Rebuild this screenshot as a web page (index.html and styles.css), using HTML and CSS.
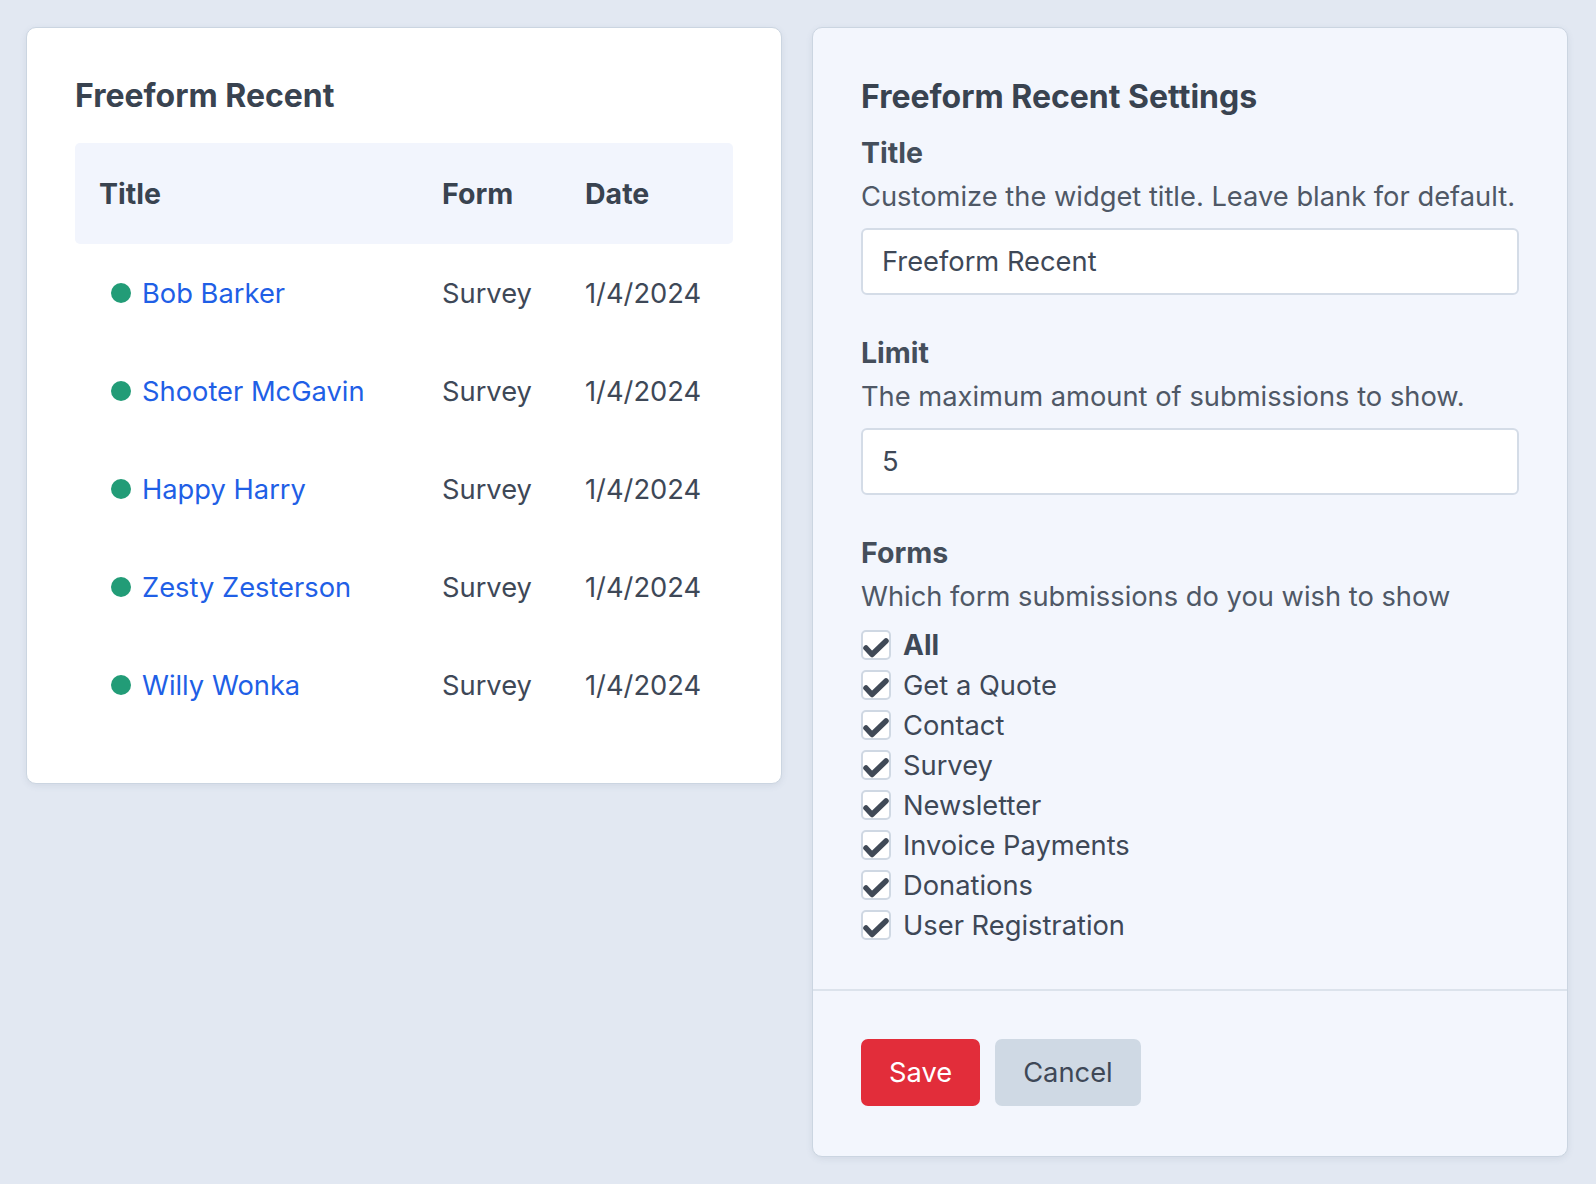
FILE: index.html
```html
<!DOCTYPE html>
<html lang="en">
<head>
<meta charset="utf-8">
<title>Freeform Recent</title>
<link rel="stylesheet" href="styles.css">
</head>
<body>
<div class="page">
  <section class="card card-widget">
    <h2 class="card-title">Freeform Recent</h2>
    <table class="recent">
      <colgroup><col class="c-title"><col class="c-form"><col class="c-date"></colgroup>
      <thead>
        <tr><th>Title</th><th>Form</th><th>Date</th></tr>
      </thead>
      <tbody>
        <tr><td><span class="entry"><span class="dot"></span><a href="#">Bob Barker</a></span></td><td>Survey</td><td>1/4/2024</td></tr>
        <tr><td><span class="entry"><span class="dot"></span><a href="#">Shooter McGavin</a></span></td><td>Survey</td><td>1/4/2024</td></tr>
        <tr><td><span class="entry"><span class="dot"></span><a href="#">Happy Harry</a></span></td><td>Survey</td><td>1/4/2024</td></tr>
        <tr><td><span class="entry"><span class="dot"></span><a href="#">Zesty Zesterson</a></span></td><td>Survey</td><td>1/4/2024</td></tr>
        <tr><td><span class="entry"><span class="dot"></span><a href="#">Willy Wonka</a></span></td><td>Survey</td><td>1/4/2024</td></tr>
      </tbody>
    </table>
  </section>

  <section class="card card-settings">
    <div class="settings-body">
      <h2 class="card-title">Freeform Recent Settings</h2>
      <div class="field">
        <div class="label">Title</div>
        <div class="desc">Customize the widget title. Leave blank for default.</div>
        <div class="input">Freeform Recent</div>
      </div>
      <div class="field">
        <div class="label">Limit</div>
        <div class="desc">The maximum amount of submissions to show.</div>
        <div class="input">5</div>
      </div>
      <div class="field">
        <div class="label">Forms</div>
        <div class="desc">Which form submissions do you wish to show</div>
        <ul class="checks">
          <li class="check-row"><span class="box"><svg viewBox="0 0 30 30"><polyline points="5,18 11,24.5 25,11"/></svg></span><span class="check-label strong">All</span></li>
          <li class="check-row"><span class="box"><svg viewBox="0 0 30 30"><polyline points="5,18 11,24.5 25,11"/></svg></span><span class="check-label">Get a Quote</span></li>
          <li class="check-row"><span class="box"><svg viewBox="0 0 30 30"><polyline points="5,18 11,24.5 25,11"/></svg></span><span class="check-label">Contact</span></li>
          <li class="check-row"><span class="box"><svg viewBox="0 0 30 30"><polyline points="5,18 11,24.5 25,11"/></svg></span><span class="check-label">Survey</span></li>
          <li class="check-row"><span class="box"><svg viewBox="0 0 30 30"><polyline points="5,18 11,24.5 25,11"/></svg></span><span class="check-label">Newsletter</span></li>
          <li class="check-row"><span class="box"><svg viewBox="0 0 30 30"><polyline points="5,18 11,24.5 25,11"/></svg></span><span class="check-label">Invoice Payments</span></li>
          <li class="check-row"><span class="box"><svg viewBox="0 0 30 30"><polyline points="5,18 11,24.5 25,11"/></svg></span><span class="check-label">Donations</span></li>
          <li class="check-row"><span class="box"><svg viewBox="0 0 30 30"><polyline points="5,18 11,24.5 25,11"/></svg></span><span class="check-label">User Registration</span></li>
        </ul>
      </div>
    </div>
    <div class="settings-footer">
      <button class="btn btn-save" type="button">Save</button>
      <button class="btn btn-cancel" type="button">Cancel</button>
    </div>
  </section>
</div>
</body>
</html>
```

FILE: styles.css
```css
* { box-sizing: border-box; }

html, body {
  margin: 0;
  padding: 0;
}

body {
  background: #e2e8f2;
  font-family: Inter, "Noto Sans", "Liberation Sans", sans-serif;
  color: #3e4857;
  min-height: 1184px;
}

.page {
  display: grid;
  grid-template-columns: 1fr 1fr;
  gap: 30px;
  padding: 27px 28px 28px 26px;
  align-items: start;
}

.card {
  border: 1px solid #cbd5e1;
  border-radius: 10px;
  box-shadow: 0 2px 6px rgba(100, 116, 139, 0.12);
}

.card-widget {
  background: #ffffff;
  padding: 48px 48px 49px;
}

.card-title {
  margin: 0;
  font-size: 32px;
  line-height: 40px;
  font-weight: 700;
  color: #394350;
}

.recent {
  width: 100%;
  margin-top: 27px;
  border-collapse: collapse;
  table-layout: fixed;
  font-size: 27.3px;
}

.c-title { width: 343px; }
.c-form { width: 143px; }

.recent th {
  background: #f2f5fd;
  height: 101px;
  padding: 0 24px;
  text-align: left;
  font-size: 28.5px;
  font-weight: 700;
  color: #394350;
}

.recent th:first-child { border-radius: 5px 0 0 5px; }
.recent th:last-child { border-radius: 0 5px 5px 0; }

.recent td {
  height: 98px;
  padding: 0 24px;
  color: #3e4857;
  white-space: nowrap;
}

.entry {
  display: flex;
  align-items: center;
  gap: 11px;
  padding-left: 12px;
}

.dot {
  width: 20px;
  height: 20px;
  border-radius: 50%;
  background: #229c77;
  flex: none;
}

.entry a {
  color: #1f5fe6;
  text-decoration: none;
}

.card-settings {
  background: #f3f6fd;
}

.settings-body {
  padding: 49px 48px 44px;
}

.field { margin-top: 16px; }
.field + .field { margin-top: 38px; }

.label {
  font-size: 28.5px;
  line-height: 40px;
  font-weight: 700;
  color: #444e5b;
}

.desc {
  margin-top: 4px;
  font-size: 27.3px;
  line-height: 40px;
  color: #4f5866;
}

.input {
  margin-top: 11px;
  height: 67px;
  display: flex;
  align-items: center;
  padding: 0 19px;
  background: #ffffff;
  border: 2px solid #d4dce7;
  border-radius: 6px;
  font-size: 27.3px;
  color: #3e4857;
}

.checks {
  list-style: none;
  margin: 8px 0 0;
  padding: 0;
}

.check-row {
  height: 40px;
  display: flex;
  align-items: center;
  gap: 12px;
  font-size: 27.3px;
  color: #3e4857;
}

.box {
  position: relative;
  width: 30px;
  height: 30px;
  flex: none;
  background: #ffffff;
  border: 2px solid #cfd8e3;
  border-radius: 5px;
}

.box svg {
  position: absolute;
  left: -2px;
  top: -2px;
  width: 30px;
  height: 30px;
  overflow: visible;
  fill: none;
  stroke: #404a57;
  stroke-width: 5.5;
  stroke-linecap: round;
  stroke-linejoin: round;
}

.strong { font-weight: 700; font-size: 28px; }

.settings-footer {
  border-top: 2px solid #dce3ec;
  padding: 48px 48px 50px;
  display: flex;
  gap: 15px;
}

.btn {
  height: 67px;
  border: 0;
  border-radius: 7px;
  font-family: inherit;
  font-size: 27.3px;
  padding: 0 28px;
  cursor: pointer;
}

.btn-save {
  background: #e22d3a;
  color: #ffffff;
}

.btn-cancel {
  background: #cfd9e4;
  color: #3e4857;
}
```
